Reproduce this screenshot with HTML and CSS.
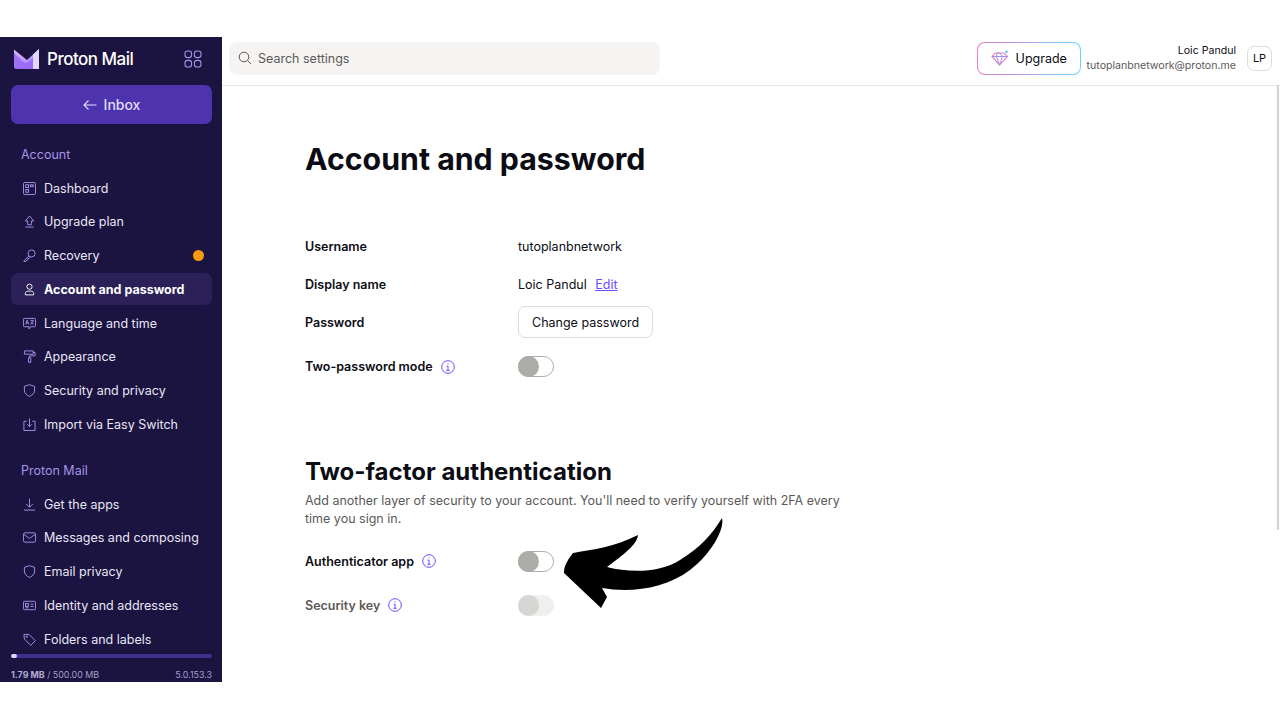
FILE: index.html
```html
<!DOCTYPE html>
<html lang="en">
  <head>
    <meta charset="UTF-8" />
    <title>Account and password - Proton Mail</title>
    <link rel="stylesheet" href="styles.css">
  </head>
  <body>
    <div class="app">
      <aside class="sidebar">
        <div class="brand">
          <svg class="logo" viewBox="0 0 26 22" width="26" height="22">
            <defs>
              <linearGradient id="logoA" x1="0" y1="0" x2="1" y2="1">
                <stop offset="0" stop-color="#d4b8ff" />
                <stop offset="1" stop-color="#a77bff" />
              </linearGradient>
            </defs>
            <path d="M0 1.5 13 12 25 1v18a2 2 0 0 1-2 2H3a3 3 0 0 1-3-3z" fill="url(#logoA)" />
            <path d="M19 6.500 25 1v20h-6z" fill="#e3d6ff" />
            <path d="M0 5l9 8.500c2 1.600 4 1.600 6 0l4-3.500V21H3a3 3 0 0 1-3-3z" fill="#9260fa" opacity=".75" />
          </svg>
          <span class="brand-name">Proton Mail</span>
          <svg class="apps" viewBox="0 0 18 18" width="18" height="18">
            <rect x="1" y="1" width="6.6" height="6.6" rx="2.6" />
            <rect x="10.4" y="1" width="6.6" height="6.6" rx="2.6" />
            <rect x="1" y="10.4" width="6.6" height="6.6" rx="2.6" />
            <rect x="10.4" y="10.4" width="6.6" height="6.6" rx="2.6" />
          </svg>
        </div>
        <a class="inbox">
          <svg viewBox="0 0 14 12" width="14" height="12"><path d="M13.5 6H1M5.5 1.5 1 6l4.5 4.5" /></svg>
          Inbox
        </a>
        <nav class="nav">
          <div class="nav-title">Account</div>
          <a class="nav-item">
            <svg viewBox="0 0 14 14"><rect x=".5" y=".5" width="13" height="13" rx="1.5" /><rect x="3" y="3" width="3" height="3" /><rect x="8" y="3" width="3" height="2" /><rect x="3" y="8" width="3" height="3" /></svg>
            Dashboard
          </a>
          <a class="nav-item">
            <svg viewBox="0 0 14 14"><path d="M7 1 2.5 6.5h2.5V10.5h4V6.5h2.5zM2.5 13h9" /></svg>
            Upgrade plan
          </a>
          <a class="nav-item">
            <svg viewBox="0 0 14 14"><circle cx="9.2" cy="4.8" r="3.8" /><path d="M6.4 7.4 1 12.6v.9h2l.8-1.4 1.2-.2.3-1.5 1.5-.4.8-1" /></svg>
            Recovery
            <span class="dot"></span>
          </a>
          <a class="nav-item active">
            <svg viewBox="0 0 14 14"><circle cx="7" cy="4" r="2.8" /><path d="M2.5 12.8v-1.3c0-1.6 1-2.7 2.6-2.7h3.8c1.6 0 2.600 1.100 2.600 2.700v1.300z" /></svg>
            Account and password
          </a>
          <a class="nav-item">
            <svg viewBox="0 0 14 14"><path d="M1.500 1.500h11a1 1 0 0 1 1 1v7a1 1 0 0 1-1 1H8L6.500 13v-2.500h-5a1 1 0 0 1-1-1v-7a1 1 0 0 1 1-1zM2.800 8 4.500 3.500 6.200 8M3.400 6.500h2.200M8 4h3.500M9.700 3v1M11 4c-.4 1.800-1.500 3-3 4M8.800 5.500c.6 1.100 1.400 1.900 2.500 2.500" /></svg>
            Language and time
          </a>
          <a class="nav-item">
            <svg viewBox="0 0 14 14"><path d="M1.500 1h9.500v3.500H1.500zM11 2.700h2v3.600H7.200v2M6 8.300h2.400v5H6z" /></svg>
            Appearance
          </a>
          <a class="nav-item">
            <svg viewBox="0 0 14 14"><path d="M7 .8 12.500 2.500v4c0 3.300-2.200 5.600-5.500 6.800-3.300-1.200-5.500-3.500-5.500-6.800v-4z" /></svg>
            Security and privacy
          </a>
          <a class="nav-item">
            <svg viewBox="0 0 14 14"><path d="M4 3.500H1v10h12v-10h-3M7 .5v8.500M4.500 6.800 7 9.300l2.500-2.500" /></svg>
            Import via Easy Switch
          </a>

          <div class="nav-title second">Proton Mail</div>
          <a class="nav-item">
            <svg viewBox="0 0 14 14"><path d="M7 .8v9M3.500 6.500 7 10l3.500-3.500M1 13h12" /></svg>
            Get the apps
          </a>
          <a class="nav-item">
            <svg viewBox="0 0 14 14"><rect x=".5" y="2" width="13" height="10" rx="1.500" /><path d="M.8 3.500 7 8l6.200-4.500" /></svg>
            Messages and composing
          </a>
          <a class="nav-item">
            <svg viewBox="0 0 14 14"><path d="M7 .8 12.500 2.500v4c0 3.300-2.200 5.600-5.500 6.800-3.300-1.200-5.500-3.500-5.500-6.800v-4z" /></svg>
            Email privacy
          </a>
          <a class="nav-item">
            <svg viewBox="0 0 14 14"><rect x=".5" y="2.500" width="13" height="9" rx="1" /><rect x="2.700" y="5" width="3" height="3" /><path d="M8 5.500h3.500M8 8h3.500M2.700 9.500h3" /></svg>
            Identity and addresses
          </a>
          <a class="nav-item">
            <svg viewBox="0 0 14 14"><path d="M1 1.500h5.500l6.800 6.800-5 5L1.500 6.500z" /><circle cx="4" cy="4" r=".8" /></svg>
            Folders and labels
          </a>
        </nav>
        <div class="storage">
          <div class="storage-bar"><div class="storage-fill"></div></div>
          <div class="storage-info">
            <span><b>1.79 MB</b> / 500.00 MB</span>
            <span>5.0.153.3</span>
          </div>
        </div>
      </aside>

      <div class="main">
        <header class="topbar">
          <div class="search">
            <svg viewBox="0 0 14 14" width="14" height="14"><circle cx="6" cy="6" r="4.800" /><path d="M9.500 9.500 13 13" /></svg>
            <span>Search settings</span>
          </div>
          <a class="upgrade">
            <svg viewBox="0 0 18 16" width="18" height="16">
              <path d="M4 3h9l3.500 3.500L8.500 15 1 6.500z" fill="none" stroke="#e58ac9" stroke-width="1.200" />
              <path d="M1 6.500h15.500M5.500 6.500 8.500 15l3-8.500L9 3l-3 0z" fill="none" stroke="#a08fe8" stroke-width="1" />
              <circle cx="15.500" cy="1.800" r="1.300" fill="#5cc3ee" />
            </svg>
            Upgrade
          </a>
          <div class="user">
            <div class="user-name">Loic Pandul</div>
            <div class="user-mail">tutoplanbnetwork@proton.me</div>
          </div>
          <div class="avatar">LP</div>
        </header>

        <main class="content">
          <h1>Account and password</h1>
          <div class="fields">
            <div class="row row-user">
              <div class="label">Username</div>
              <div>tutoplanbnetwork</div>
            </div>
            <div class="row row-display">
              <div class="label">Display name</div>
              <div>Loic Pandul <a class="edit">Edit</a></div>
            </div>
            <div class="row row-pass">
              <div class="label">Password</div>
              <div><button class="btn">Change password</button></div>
            </div>
            <div class="row row-mode">
              <div class="label">Two-password mode
                <svg class="info" viewBox="0 0 14 14"><circle cx="7" cy="7" r="6.300" /><path d="M7 6v4.200M5.600 6.200H7M5.400 10.300h3.200M7 3.400v1" /></svg>
              </div>
              <div><span class="toggle"></span></div>
            </div>
          </div>

          <h2>Two-factor authentication</h2>
          <p class="desc">Add another layer of security to your account. You'll need to verify yourself with 2FA every time you sign in.</p>
          <div class="row row-auth">
            <div class="label">Authenticator app
              <svg class="info" viewBox="0 0 14 14"><circle cx="7" cy="7" r="6.300" /><path d="M7 6v4.200M5.600 6.200H7M5.400 10.300h3.200M7 3.400v1" /></svg>
            </div>
            <div><span class="toggle"></span></div>
          </div>
          <div class="row row-key">
            <div class="label muted">Security key
              <svg class="info" viewBox="0 0 14 14"><circle cx="7" cy="7" r="6.300" /><path d="M7 6v4.200M5.600 6.200H7M5.400 10.300h3.200M7 3.400v1" /></svg>
            </div>
            <div><span class="toggle off"></span></div>
          </div>
        </main>
        <div class="scrollbar"></div>
      </div>
    </div>

    <svg class="arrow" viewBox="0 0 170 100" width="170" height="100">
      <path d="M162 3C165 15 150 40 130 55C105 74 70 78 42 73L47 82L41 93L4 58C4 52 6 47 13 38C30 35 55 32 78 20C77 28 70 35 47 52C70 58 100 58 120 45C140 33 153 18 162 3Z" fill="#000" />
    </svg>
  </body>
</html>
```

FILE: styles.css
```css
* {
  box-sizing: border-box;
}
body {
  margin: 0;
  height: 720px;
  overflow: hidden;
  background: #fff;
  font-family: Inter, "Liberation Sans", sans-serif;
  font-size: 12.5px;
  color: #0c0c14;
}
.app {
  display: flex;
  margin-top: 37px;
  height: 645px;
  overflow: hidden;
}

/* sidebar */
.sidebar {
  width: 222px;
  flex: none;
  background: #1b1340;
  color: #e8e6f5;
  display: flex;
  flex-direction: column;
  padding: 0 10px 0 11px;
}
.brand {
  display: flex;
  align-items: center;
  height: 48px;
  padding: 0 0 5px 3px;
  flex: none;
}
.brand-name {
  font-size: 17px;
  font-weight: 500;
  letter-spacing: -0.5px;
  color: #fff;
  margin-left: 7px;
}
.apps {
  margin-left: auto;
  margin-right: 10px;
  fill: none;
  stroke: #a493ea;
  stroke-width: 1.1;
}
.inbox {
  display: flex;
  align-items: center;
  justify-content: center;
  gap: 7px;
  flex: none;
  height: 39px;
  background: #4d34ae;
  border-radius: 7px;
  color: #e3dcff;
  font-size: 14px;
  font-weight: 500;
}
.inbox svg {
  fill: none;
  stroke: #e3dcff;
  stroke-width: 1.1;
}
.nav {
  flex: 1;
  overflow: hidden;
  margin-top: 14px;
}
.nav-title {
  color: #a893e6;
  padding-left: 10px;
  height: 34px;
  line-height: 33px;
}
.nav-title.second {
  margin-top: 13px;
  height: 34.5px;
}
.nav-item {
  display: flex;
  align-items: center;
  gap: 8px;
  height: 32px;
  margin-bottom: 1.8px;
  padding: 0 8px 0 12px;
  border-radius: 7px;
  white-space: nowrap;
}
.nav-item svg {
  width: 13px;
  height: 13px;
  flex: none;
  fill: none;
  stroke: #a897ec;
  stroke-width: 1;
}
.nav-item.active {
  background: #2b2058;
  color: #fff;
  font-weight: 700;
}
.nav-item.active svg {
  stroke: #fff;
}
.dot {
  width: 11px;
  height: 11px;
  border-radius: 50%;
  background: #f99b0c;
  margin-left: auto;
}
.storage {
  flex: none;
  height: 33px;
  padding-top: 5px;
  background: #1b1340;
}
.storage-bar {
  height: 4px;
  background: #412f8c;
  border-radius: 2px;
}
.storage-fill {
  width: 6px;
  height: 4px;
  background: #dcd7f5;
  border-radius: 2px;
}
.storage-info {
  display: flex;
  justify-content: space-between;
  margin-top: 11px;
  font-size: 8.9px;
  color: #a79fc9;
}
.storage-info b {
  font-weight: 700;
  color: #b4aed4;
}

/* main */
.main {
  flex: 1;
  position: relative;
  display: flex;
  flex-direction: column;
  min-width: 0;
}
.topbar {
  display: flex;
  align-items: center;
  height: 49px;
  flex: none;
  padding: 0 8px 6px 7px;
  border-bottom: 1px solid #e8e7e4;
}
.search {
  display: flex;
  align-items: center;
  gap: 6px;
  width: 431px;
  height: 33px;
  padding: 0 9px;
  background: #f5f4f2;
  border-radius: 8px;
  color: #5c5958;
}
.search svg {
  fill: none;
  stroke: #5c5958;
  stroke-width: 1;
}
.upgrade {
  display: flex;
  align-items: center;
  gap: 7px;
  width: 104px;
  height: 33px;
  margin-left: auto;
  padding-left: 13px;
  border: 1.500px solid transparent;
  border-radius: 8px;
  background: linear-gradient(#fff, #fff) padding-box,
    linear-gradient(90deg, #f27ec0, #a9a4ee, #62d6f7) border-box;
}
.user {
  margin-left: 6px;
  text-align: right;
  font-size: 10.6px;
  line-height: 15px;
}
.user-mail {
  color: #5c5958;
}
.avatar {
  width: 25px;
  height: 25px;
  margin-left: 11px;
  border: 1px solid #dedbd8;
  border-radius: 7px;
  display: flex;
  align-items: center;
  justify-content: center;
  font-size: 11px;
}
.content {
  flex: 1;
  padding: 51px 0 0 83px;
}
h1 {
  margin: 0;
  font-size: 30.3px;
  line-height: 44px;
  font-weight: 700;
}
.fields {
  margin-top: 46px;
}
.row {
  display: flex;
  align-items: center;
}
.row > div:first-child {
  width: 213px;
  flex: none;
}
.label {
  font-weight: 600;
  display: flex;
  align-items: center;
  gap: 8px;
}
.label.muted {
  color: #5c5958;
}
.info {
  width: 14px;
  height: 14px;
  fill: none;
  stroke: #6d4aff;
  stroke-width: 1;
}
.row-user {
  height: 38px;
}
.row-display {
  height: 38px;
}
.row-pass {
  height: 38px;
}
.row-mode {
  height: 45px;
  padding-top: 6px;
}
.edit {
  color: #6d4aff;
  text-decoration: underline;
  margin-left: 5px;
}
.btn {
  height: 32px;
  padding: 0 13px;
  background: #fff;
  border: 1px solid #dedbd8;
  border-radius: 7px;
  font: inherit;
  color: inherit;
}
.toggle {
  display: block;
  width: 36px;
  height: 21px;
  border: 1px solid #adaca8;
  border-radius: 11px;
  position: relative;
}
.toggle::before {
  content: "";
  position: absolute;
  left: -1px;
  top: -1px;
  width: 21px;
  height: 21px;
  border-radius: 50%;
  background: #adaca8;
}
.toggle.off {
  border-color: #efefee;
  background: #efefee;
}
.toggle.off::before {
  background: #d6d5d3;
}
h2 {
  margin: 69px 0 0;
  font-size: 24px;
  line-height: 34px;
  font-weight: 700;
}
.desc {
  width: 540px;
  margin: 3px 0 0;
  line-height: 18px;
  color: #5c5958;
}
.row-auth {
  height: 44px;
  margin-top: 11px;
}
.row-key {
  height: 44px;
}
.scrollbar {
  position: absolute;
  right: 1px;
  top: 48px;
  width: 2px;
  height: 445px;
  background: #d5d3d0;
}
.arrow {
  position: absolute;
  left: 560px;
  top: 515px;
}
```
